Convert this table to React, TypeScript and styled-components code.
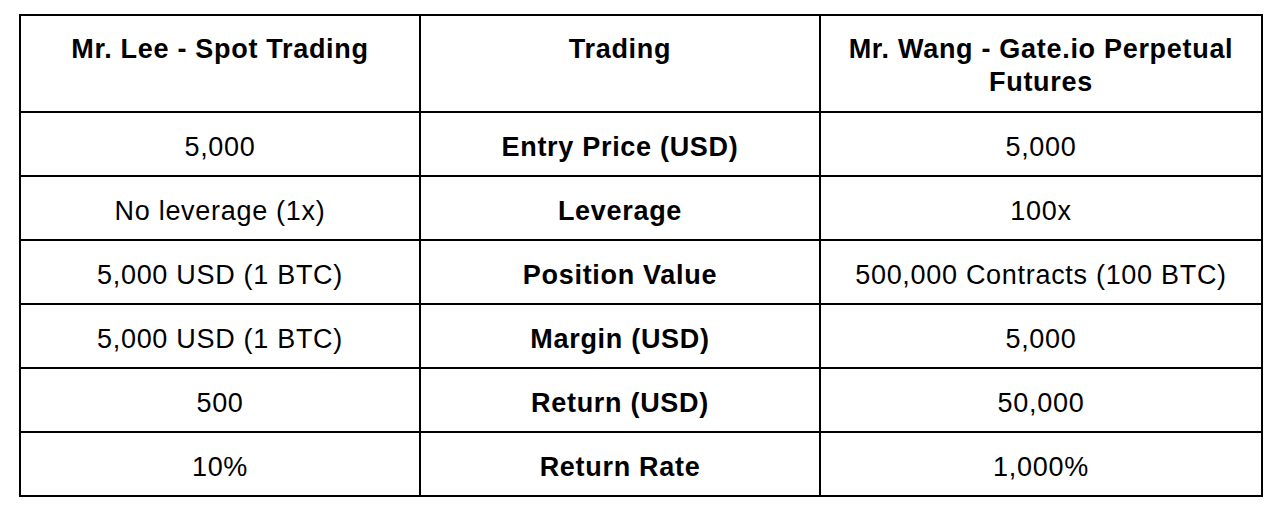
import styled, { createGlobalStyle } from "styled-components";

const GlobalStyle = createGlobalStyle`
  body {
    margin: 0;
    background: #ffffff;
    font-family: "Liberation Sans", Arial, sans-serif;
    color: #000000;
  }
`;

const headers = [
  "Mr. Lee - Spot Trading",
  "Trading",
  "Mr. Wang - Gate.io Perpetual Futures",
];

const rows = [
  ["5,000", "Entry Price (USD)", "5,000"],
  ["No leverage (1x)", "Leverage", "100x"],
  ["5,000 USD (1 BTC)", "Position Value", "500,000 Contracts (100 BTC)"],
  ["5,000 USD (1 BTC)", "Margin (USD)", "5,000"],
  ["500", "Return (USD)", "50,000"],
  ["10%", "Return Rate", "1,000%"],
];

const colWidths = [400, 400, 442];

export default function App() {
  return (
    <Page>
      <GlobalStyle />
      <Table>
        <colgroup>
          {colWidths.map((w, i) => (
            <col key={i} style={{ width: w }} />
          ))}
        </colgroup>
        <thead>
          <tr>
            {headers.map((h) => (
              <HeadCell key={h}>{h}</HeadCell>
            ))}
          </tr>
        </thead>
        <tbody>
          {rows.map((row, r) => (
            <BodyRow key={r}>
              {row.map((text, c) => (
                <Cell key={c} $bold={c === 1}>
                  {text}
                </Cell>
              ))}
            </BodyRow>
          ))}
        </tbody>
      </Table>
    </Page>
  );
}

const Page = styled.div`
  padding: 14px 0 0 19px;
`;

const Table = styled.table`
  border-collapse: separate;
  border-spacing: 0;
  table-layout: fixed;
  width: 1244px;
  border-top: 2px solid #000;
  border-left: 2px solid #000;
`;

const HeadCell = styled.th`
  box-sizing: border-box;
  height: 97px;
  padding: 17px 14px 0;
  vertical-align: top;
  text-align: center;
  font-size: 27px;
  line-height: 33px;
  letter-spacing: 0.7px;
  font-weight: 700;
  border-right: 2px solid #000;
  border-bottom: 2px solid #000;
`;

const BodyRow = styled.tr`
  height: 64px;
`;

const Cell = styled.td<{ $bold?: boolean }>`
  box-sizing: border-box;
  height: 64px;
  padding: 6px 10px 0;
  vertical-align: middle;
  text-align: center;
  font-size: 27px;
  line-height: 33px;
  letter-spacing: 0.7px;
  font-weight: ${(p) => (p.$bold ? 700 : 400)};
  white-space: nowrap;
  border-right: 2px solid #000;
  border-bottom: 2px solid #000;
`;
